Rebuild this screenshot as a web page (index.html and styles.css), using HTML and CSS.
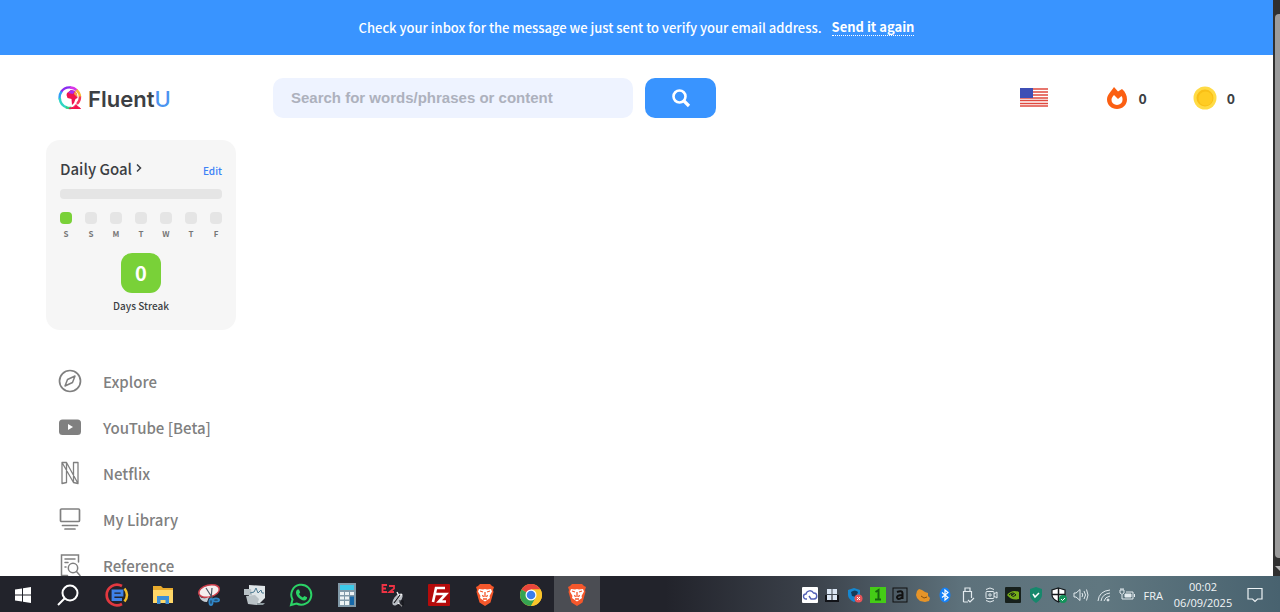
FILE: index.html
```html
<!DOCTYPE html>
<html lang="en">
<head>
    <meta charset="UTF-8">
    <meta name="viewport" content="width=device-width, initial-scale=1.0">
    <title>FluentU</title>
    <link rel="stylesheet" href="styles.css">
</head>
<body>

<div class="window">
    <div class="page">
        <div class="banner">
            <span>Check your inbox for the message we just sent to verify your email address.</span>
            <a href="#">Send it again</a>
        </div>

        <header>
            <a href="#" class="logo">
                <svg width="24" height="24" viewBox="0 0 24 24" fill="none" stroke-width="2.400">
                    <path d="M3 6A10.500 10.500 0 0 1 13 1.500" stroke="#8a2cf0"/>
                    <path d="M12 1.500A10 10 0 0 1 19 4.500" stroke="#d836e8"/>
                    <path d="M18.500 4A10 10 0 0 1 22 11" stroke="#f7b733"/>
                    <path d="M22 10.500A10 10 0 0 1 19 18" stroke="#f5365c"/>
                    <path d="M3.500 5.500A10 10 0 0 0 2 14" stroke="#2f9df5"/>
                    <path d="M1.800 12A10.500 10.500 0 0 0 9 21.500" stroke="#2fd6c3"/>
                    <path d="M8 21.300q3 1 5.500 0.500" stroke="#35d07f"/>
                    <path d="M11 22.500q5-.5 7-4l1 1.500 3.500 2.500z" fill="#f5124e" stroke="#f5124e" stroke-width="1"/>
                    <path d="M9 7l4-3 4 1 2 3 .5 4-2 1-1.500 4-2 2-.5-6-4-1-1-3z" fill="#f0144f"/>
                    <path d="M10 7l3-3 4 1-2 3z" fill="#a92cf0"/>
                    <path d="M17 5l2 3v3l-3-3z" fill="#f5a04a"/>
                </svg>
                <span>Fluent<b>U</b></span>
            </a>

            <form class="search">
                <input type="text" placeholder="Search for words/phrases or content" aria-label="Search">
                <button type="button" aria-label="Search">
                    <svg width="20" height="20" viewBox="0 0 20 20" fill="none" stroke="#fff">
                        <circle cx="8.500" cy="8.500" r="6" stroke-width="2.600"/>
                        <path d="M13 13l5 5" stroke-width="3.200"/>
                    </svg>
                </button>
            </form>

            <div class="stats">
                <svg class="flag" width="28" height="19" viewBox="0 0 28 19">
                    <rect width="28" height="19" rx="1" fill="#fff"/>
                    <path d="M0 1h28M0 4h28M0 7h28M0 10h28M0 12.500h28M0 15.500h28M0 18h28" stroke="#e0493f" stroke-width="1.500"/>
                    <rect width="13" height="10" fill="#3f4fb5"/>
                </svg>
                <div class="stat">
                    <svg width="22" height="24" viewBox="0 0 22 24">
                        <path fill="#fb5f12" fill-rule="evenodd" d="M8 1l4 4.500L16 3c3.500 3 5 6.500 5 10.500C21 19 16.500 23 11 23S1 19 1 13.500C1 8.500 5.500 5 8 1zM8 9C6 11 5.500 12.500 5.500 14a5.500 5 0 0 0 11 0c0-1.500 0-2.500-1-4l-3.500 3z"/>
                    </svg>
                    <span>0</span>
                </div>
                <div class="stat">
                    <svg width="24" height="24" viewBox="0 0 24 24">
                        <circle cx="12" cy="12" r="11.500" fill="#ffdb45"/>
                        <circle cx="12" cy="12" r="8.500" fill="#f9bf16"/>
                        <circle cx="12.500" cy="12.500" r="7" fill="#ffcc22"/>
                    </svg>
                    <span>0</span>
                </div>
            </div>
        </header>

        <aside>
            <section class="goal">
                <div class="goal-head">
                    <h2>Daily Goal <svg width="6" height="10" viewBox="0 0 6 10" fill="none" stroke="#3c3f44" stroke-width="1.500"><path d="M1 1.500L4.500 5 1 8.500"/></svg></h2>
                    <a href="#">Edit</a>
                </div>
                <div class="bar"></div>
                <ul class="days">
                    <li class="on">S</li>
                    <li>S</li>
                    <li>M</li>
                    <li>T</li>
                    <li>W</li>
                    <li>T</li>
                    <li>F</li>
                </ul>
                <div class="streak">0</div>
                <p>Days Streak</p>
            </section>

            <nav>
                <a href="#">
                    <svg width="24" height="24" viewBox="0 0 24 24" fill="none" stroke="#808080" stroke-width="1.700">
                        <circle cx="12" cy="12" r="10.500"/>
                        <path d="M17 7l-2.500 6.500L7 17l2.500-6.500z" stroke-linejoin="round" stroke-width="1.500"/>
                    </svg>
                    Explore
                </a>
                <a href="#">
                    <svg width="24" height="24" viewBox="0 0 24 24">
                        <rect x="1" y="4.500" width="22" height="15.500" rx="3.500" fill="#808080"/>
                        <path d="M10 9v6l5-3z" fill="#fff"/>
                    </svg>
                    YouTube [Beta]
                </a>
                <a href="#">
                    <svg width="24" height="24" viewBox="0 0 24 24" fill="none" stroke="#808080" stroke-width="1.300" stroke-linejoin="round">
                        <path d="M4 1.500v21l4.500-1V1.500zM15.500 1.500v20l4.500 1v-21zM4 1.500h4.500L20 22.500l-4.500-1z"/>
                    </svg>
                    Netflix
                </a>
                <a href="#">
                    <svg width="24" height="24" viewBox="0 0 24 24" fill="none" stroke="#808080" stroke-width="1.700" stroke-linecap="round">
                        <rect x="2.500" y="2" width="19" height="12.500" rx="1"/>
                        <path d="M4.500 18.500h15M7 22h10"/>
                    </svg>
                    My Library
                </a>
                <a href="#">
                    <svg width="24" height="24" viewBox="0 0 24 24" fill="none" stroke="#808080" stroke-width="1.500" stroke-linecap="round">
                        <path d="M20.500 9V2h-17v20.500h6M7 6h10M7 9.500h3M7 14h1"/>
                        <circle cx="15" cy="15" r="4.700"/>
                        <path d="M18.500 18.500l3.500 4"/>
                    </svg>
                    Reference
                </a>
            </nav>
        </aside>
    </div>

    <div class="scrollbar">
        <div class="thumb"></div>
        <div class="arrow"></div>
    </div>
</div>

<footer class="taskbar">
    <div class="apps">
        <button class="small" aria-label="Start">
            <svg width="16" height="16" viewBox="0 0 16 16" fill="#fff"><path d="M0 2.500l7-1v6H0zM8 1.300L16 0v7.500H8zM0 8.500h7v6l-7-1zM8 8.500h8V16l-8-1.300z"/></svg>
        </button>
        <button class="small" aria-label="Search">
            <svg width="22" height="22" viewBox="0 0 22 22" fill="none" stroke="#fff" stroke-width="2"><circle cx="13" cy="9" r="7.500"/><path d="M7.500 14.500L1 21"/></svg>
        </button>
        <button class="first" aria-label="Browser">
            <svg width="24" height="24" viewBox="0 0 24 24" fill="none"><path d="M17 3A10.300 10.300 0 1 0 17 21" stroke="#e2383f" stroke-width="2.700"/><path d="M19.500 5.500q5 6.500 0 13" stroke="#f4bd27" stroke-width="2.500"/><path d="M17 16.500H8V8h9v4.200H9" stroke="#3f82e8" stroke-width="2.800"/></svg>
        </button>
        <button aria-label="Files">
            <svg width="22" height="20" viewBox="0 0 22 20"><path d="M1 1h8l2 2h10v15H1z" fill="#e9ab2d"/><path d="M1 5h20v13H1z" fill="#ffd768"/><path d="M5 19v-8h12v8h-3.500v-4h-5v4z" fill="#3c8fd8"/></svg>
        </button>
        <button aria-label="Snipping tool">
            <svg width="24" height="24" viewBox="0 0 24 24" fill="none"><ellipse cx="12" cy="8" rx="10.500" ry="6" transform="rotate(-14 12 8)" fill="#f5eeee" stroke="#cc3e4b" stroke-width="1.500"/><path d="M2 13q4 4 10 1l-2 5q-6 0-8-6" fill="#c7cdd4"/><path d="M9 5l7 11M15 5l-1 11" stroke="#4a5563" stroke-width="1.200"/><ellipse cx="14" cy="19" rx="1.500" ry="3" stroke="#2f86c8" stroke-width="2"/><ellipse cx="19" cy="17" rx="3" ry="1.500" stroke="#2f86c8" stroke-width="2"/></svg>
        </button>
        <button aria-label="Monitor">
            <svg width="24" height="24" viewBox="0 0 24 24"><path d="M6 2l16 1v12l-5 5H6z" fill="#dfe5e8"/><path d="M1 6h7l1 6H1zM3 13l9-1 4 4-2 6-9-1z" fill="#b9c1c6"/><path d="M7 10l4-1 2-4 2 5 3-3 1 3h2" fill="none" stroke="#4c7890" stroke-width="1"/><path d="M14 20h8l-2 2h-6z" fill="#8c989d"/></svg>
        </button>
        <button aria-label="WhatsApp">
            <svg width="24" height="24" viewBox="0 0 24 24"><path d="M2 22l1.500-5.500A10 10 0 1 1 7.500 20.500z" fill="none" stroke="#2bd366" stroke-width="2"/><path d="M8.500 6.500l1.500 0 1.200 3-1.200 1.500q1.300 2.500 3.800 3.600l1.500-1.600 2.800 1.300q0 3-3 3.200C11 17.200 6.500 12.500 7 9q.2-1.700 1.500-2.500z" fill="#2bd366"/></svg>
        </button>
        <button aria-label="Calculator">
            <svg width="18" height="24" viewBox="0 0 18 24"><rect width="18" height="24" fill="#8199a8"/><rect x="2" y="2" width="14" height="5" fill="#3ccae9"/><path d="M2 9h4v3H2zM7 9h4v3H7zM12 9h4v3h-4zM2 13.500h4v3H2zM7 13.500h4v3H7zM2 18h4v4H2zM7 18h4v4H7z" fill="#edf3f5"/><path d="M12 13.500h4V22h-4z" fill="#1769aa"/></svg>
        </button>
        <button aria-label="E2">
            <svg width="24" height="24" viewBox="0 0 24 24" fill="none"><path d="M6 2H1.500v7H6M1.500 5.500H5M8 3h5v2.500L8.500 9H13" stroke="#ee3344" stroke-width="1.800"/><ellipse cx="16.500" cy="16.500" rx="3.500" ry="7" transform="rotate(38 16.500 16.500)" fill="#b9bdc4"/><path d="M14 18l7-7M16 9l2 4M17 20l4 3" stroke="#f4f4f4" stroke-width="1.400"/><path d="M13 20l6-8M18 18h4v4h-5" stroke="#15151a" stroke-width="1.200"/></svg>
        </button>
        <button aria-label="FileZilla">
            <svg width="22" height="22" viewBox="0 0 22 22"><rect width="22" height="22" rx="1" fill="#b50b0b"/><path d="M5 18L8 4h9M7 10h6M11 10h7l-7 7.500h7" fill="none" stroke="#fff" stroke-width="2.600"/></svg>
        </button>
        <button aria-label="Brave">
            <svg width="20" height="24" viewBox="0 0 20 24"><path d="M5 1h10l2 2 2 1-1 3 .5 2-3 10.500L10 23l-5.500-3.500L1.500 9 2 7 1 4l2-1z" fill="#f4572b"/><path d="M4 6l4 .5 2-.5 2 .5 4-.5 1 2.500-2.500 4.500.5 2-5 3.500L5 15l.5-2L3 8.500z" fill="#fff"/><path d="M5 8l3 1M15 8l-3 1M10 9v5M7.500 12l1 2M12.500 12l-1 2M8 16h4" stroke="#f4572b" stroke-width="1.300"/></svg>
        </button>
        <button aria-label="Chrome">
            <svg width="24" height="24" viewBox="0 0 24 24"><circle cx="12" cy="12" r="11" fill="#fbc52b"/><path d="M12 12L2.500 6.500A11 11 0 0 1 21.500 6.500H12z" fill="#e8453c"/><path d="M12 12l-9.500-5.500A11 11 0 0 0 12 23l4.700-8.300z" fill="#35a351"/><path d="M12 6.500h9.500A11 11 0 0 1 12 23l4.700-8.300z" fill="#fbc52b"/><circle cx="12" cy="12" r="5.500" fill="#fff"/><circle cx="12" cy="12" r="4.300" fill="#3b7ded"/></svg>
        </button>
        <button class="active" aria-label="Brave">
            <svg width="20" height="24" viewBox="0 0 20 24"><path d="M5 1h10l2 2 2 1-1 3 .5 2-3 10.500L10 23l-5.500-3.500L1.500 9 2 7 1 4l2-1z" fill="#f4572b"/><path d="M4 6l4 .5 2-.5 2 .5 4-.5 1 2.500-2.500 4.500.5 2-5 3.500L5 15l.5-2L3 8.500z" fill="#fff"/><path d="M5 8l3 1M15 8l-3 1M10 9v5M7.500 12l1 2M12.500 12l-1 2M8 16h4" stroke="#f4572b" stroke-width="1.300"/></svg>
        </button>
    </div>

    <div class="tray">
        <div class="tray-icons">
            <svg viewBox="0 0 16 16"><rect width="16" height="16" rx="1" fill="#fff"/><path d="M5 12H4a2.500 2.500 0 0 1 0-5 4 4 0 0 1 7.500-1A3 3 0 0 1 12 12H9L7 9" fill="none" stroke="#5462b8" stroke-width="1.400"/></svg>
            <svg viewBox="0 0 16 16"><path d="M1 8h14v7H1z" fill="#111318"/><path d="M3 2h4.500v5H3zM8.500 2H13v5H8.500zM3 8h4.500v5H3zM8.500 8H13v5H8.500z" fill="#dbe6f4"/></svg>
            <svg viewBox="0 0 16 16"><path d="M7 1l6 2v5q0 4-6 7Q1 12 1 8V3z" fill="#1587d0"/><path d="M4 5q4-3 7 0l-2 5-4-1z" fill="#153b5b"/><circle cx="11.500" cy="11.500" r="4" fill="#e8545a"/><path d="M10 10l3 3M13 10l-3 3" stroke="#fff"/></svg>
            <svg viewBox="0 0 16 16"><rect width="16" height="16" fill="#44cc16"/><path d="M5.500 5l3-2v9M5 12.500h6" fill="none" stroke="#17650f" stroke-width="2"/></svg>
            <svg viewBox="0 0 16 16" fill="none" stroke="#111"><rect x="1" y="1" width="14" height="14"/><path d="M5 5q5-2 5.500 1v6M10 8q-5 0-5 2.500 1 3 5 0" stroke-width="2"/></svg>
            <svg viewBox="0 0 16 16"><path d="M2 4l2-2 3 1 3 2 3 1v3l2 2-1 3-4 1-5-1-3-3-1-3z" fill="#e69428"/><path d="M6 9l3 2 3-1" fill="none" stroke="#87500f"/></svg>
            <svg viewBox="0 0 16 16"><ellipse cx="8" cy="8" rx="5.500" ry="7.500" fill="#1681f5"/><path d="M5 5.500l6 5L8 13V3l3 2.500-6 5" fill="none" stroke="#fff" stroke-width="1.200"/></svg>
            <svg viewBox="0 0 16 16" fill="none" stroke="#e2eaee"><path d="M5 4V1h5v3M3.500 15V4.500h8V11M3.500 15H8M8 13l2 2 4-4" stroke-width="1.200"/></svg>
            <svg viewBox="0 0 16 16" fill="none" stroke="#e2eaee"><rect x="3" y="4.500" width="8" height="7" rx="1"/><path d="M11 7l3-2v6l-3-2M3 2.500q4-3 8 0M3 13.500q4 3 8 0"/><circle cx="7" cy="8" r="1.200"/></svg>
            <svg viewBox="0 0 16 16"><rect width="16" height="16" rx="1" fill="#17201c"/><path d="M2 8q5-6 12-3v7q-7 2-12-4z" fill="#75ad18"/><path d="M4 8q4-4 7 0-3 3-5 0l3-1" fill="none" stroke="#17201c"/></svg>
            <svg viewBox="0 0 16 16"><path d="M8 0l6 2v6q0 4-6 8-6-4-6-8V2z" fill="#16886c"/><path d="M5 7l2 3 4-4" fill="none" stroke="#fff" stroke-width="1.500"/></svg>
            <svg viewBox="0 0 16 16"><path d="M7.500 1L14 3v5q0 4-6.500 7Q1 12 1 8V3z" fill="#fff" stroke="#14191c" stroke-width="1.200"/><path d="M7.500 1v14M1 7.500h13" stroke="#14191c" stroke-width="1.500"/><circle cx="12" cy="12" r="4" fill="#14935a"/><path d="M10 12l1.500 1.500L14 11" fill="none" stroke="#fff"/></svg>
            <svg viewBox="0 0 16 16" fill="none" stroke="#e2eaee"><path d="M1 6h2l4-3.500v11L3 10H1zM9 6q1.500 2 0 4M11 4q3 4 0 8M13.500 2.500q3 5.500 0 11"/></svg>
            <svg viewBox="0 0 16 16" fill="none" stroke="#e2eaee"><path d="M2 14Q3 4 14 3M5 14q1-7 9-8M8 14q1-4 6-5"/><circle cx="12" cy="13" r="1" fill="#e2eaee"/></svg>
            <svg viewBox="0 0 16 16" fill="none" stroke="#e2eaee"><path d="M1 3h4v3q-2 3-4 0zM2 1v2M4 1v2M3 8v4h11V5H7"/><path d="M15.500 7v3"/><path d="M6 7h6v3H6z" fill="#e2eaee"/></svg>
        </div>
        <span class="lang">FRA</span>
        <div class="clock">
            <time>00:02</time>
            <time>06/09/2025</time>
        </div>
        <button aria-label="Notifications">
            <svg width="16" height="16" viewBox="0 0 16 16" fill="none" stroke="#eef3f5" stroke-width="1.200"><path d="M1 1.500h14v10.500h-4.500L8 14.500 5.500 12H1z"/></svg>
        </button>
    </div>
</footer>

</body>
</html>
```

FILE: styles.css
```css
* {
    box-sizing: border-box;
}
body {
    display: flex;
    flex-direction: column;
    height: 100vh;
    margin: 0;
    overflow: hidden;
    background-color: #fff;
    color: #3c3f44;
    font-family: "Noto Sans CJK JP", "Noto Sans", sans-serif;
}
svg {
    display: block;
    flex-shrink: 0;
}
a {
    text-decoration: none;
}
button {
    padding: 0;
    border: none;
    background: none;
}
.window {
    display: flex;
    flex: 1;
    min-height: 0;
}
.page {
    flex: 1;
    overflow: hidden;
}

/* banner */
.banner {
    display: flex;
    justify-content: center;
    align-items: center;
    gap: 10px;
    height: 55px;
    background-color: #3994ff;
    color: #fff;
    font-size: 13px;
    font-weight: 500;
    line-height: 16px;
}
.banner a {
    color: #fff;
    font-weight: bold;
    border-bottom: 1px dotted #fff;
}

/* header */
header {
    display: flex;
    align-items: center;
    height: 85px;
    padding: 0 38px 0 58px;
}
.logo {
    display: flex;
    align-items: center;
    gap: 6px;
    width: 215px;
    color: #3c3f44;
    font-family: Inter, sans-serif;
    font-size: 22px;
    font-weight: 600;
}
.logo span {
    padding-top: 3px;
}
.logo b {
    color: #4a94f0;
    font-weight: 500;
}
.search {
    display: flex;
    gap: 12px;
}
.search input {
    width: 360px;
    height: 40px;
    padding: 0 18px;
    border: none;
    border-radius: 10px;
    background-color: #eef3ff;
    font-family: "Liberation Sans", Arial, sans-serif;
    font-size: 15px;
    font-weight: bold;
}
.search input::placeholder {
    color: #adb1bd;
}
.search button {
    display: flex;
    justify-content: center;
    align-items: center;
    width: 71px;
    border-radius: 10px;
    background-color: #3994ff;
}
.stats {
    display: flex;
    align-items: center;
    margin-left: auto;
}
.stat {
    display: flex;
    align-items: center;
    gap: 10px;
    margin-left: 46px;
    font-size: 14px;
    font-weight: bold;
}
.flag {
    margin-right: 12px;
}

/* sidebar */
aside {
    width: 190px;
    margin-left: 46px;
}
.goal {
    height: 190px;
    padding: 16px 14px;
    border-radius: 14px;
    background-color: #f6f6f6;
    text-align: center;
}
.goal-head {
    display: flex;
    justify-content: space-between;
    align-items: center;
    height: 24px;
}
.goal-head h2 {
    display: flex;
    align-items: center;
    gap: 4px;
    margin: 0;
    font-size: 15px;
    font-weight: 500;
}
.goal-head a {
    padding-top: 4px;
    color: #3c82f6;
    font-size: 10px;
    font-weight: 500;
}
.bar {
    height: 10px;
    margin-top: 9px;
    border-radius: 4px;
    background-color: #e5e5e5;
}
.days {
    display: flex;
    justify-content: space-between;
    margin: 13px 0 0;
    padding: 0;
    list-style: none;
    color: #777;
    font-size: 8px;
    font-weight: bold;
    line-height: 10px;
}
.days li {
    width: 12px;
}
.days li::before {
    content: "";
    display: block;
    height: 12px;
    margin-bottom: 5px;
    border-radius: 4px;
    background-color: #e5e5e5;
}
.days .on::before {
    background-color: #79d138;
}
.streak {
    width: 40px;
    height: 40px;
    margin: 14px auto 6px;
    border-radius: 11px;
    background-color: #79d138;
    color: #fff;
    font-size: 20px;
    font-weight: bold;
    line-height: 40px;
}
.goal p {
    margin: 0;
    font-size: 10px;
    font-weight: 500;
    line-height: 14px;
}
nav {
    margin-top: 28px;
    padding-left: 12px;
}
nav a {
    display: flex;
    align-items: center;
    gap: 21px;
    height: 46px;
    color: #808080;
    font-size: 15px;
    font-weight: 500;
    white-space: nowrap;
}

/* scrollbar */
.scrollbar {
    display: flex;
    flex-direction: column;
    align-items: center;
    justify-content: space-between;
    width: 7px;
    padding: 0 0 5px 2px;
    background-color: #303030;
}
.thumb {
    flex: 1;
    width: 5px;
    margin: 14px 0 8px;
    border-radius: 4px 0 0 4px;
    background-color: #9b9b9b;
}
.arrow {
    border-top: 5px solid #b5b5b5;
    border-left: 5px solid transparent;
}

/* taskbar */
.taskbar {
    display: flex;
    justify-content: space-between;
    height: 36px;
    background: linear-gradient(90deg, #22232b 52%, #3a4049 63%, #5d717b 75%, #607780 86%, #48626f 100%);
    color: #f2f5f7;
}
.apps {
    display: flex;
}
.apps button {
    display: flex;
    justify-content: center;
    align-items: center;
    width: 46px;
    padding-top: 2px;
}
.apps .small {
    width: 45px;
}
.apps .first {
    margin-left: 4px;
}
.apps .active {
    background-color: #4b4d53;
}
.tray {
    display: flex;
    align-items: center;
    padding: 2px 17px 0 0;
    font-family: "Open Sans", sans-serif;
    font-size: 11px;
}
.tray-icons {
    display: flex;
    justify-content: space-between;
    width: 333px;
}
.tray-icons svg {
    width: 16px;
    height: 16px;
}
.lang {
    margin-left: 9px;
}
.clock {
    width: 80px;
    line-height: 16px;
    text-align: center;
}
.clock time {
    display: block;
}
.tray button {
    margin-left: 4px;
}
```
